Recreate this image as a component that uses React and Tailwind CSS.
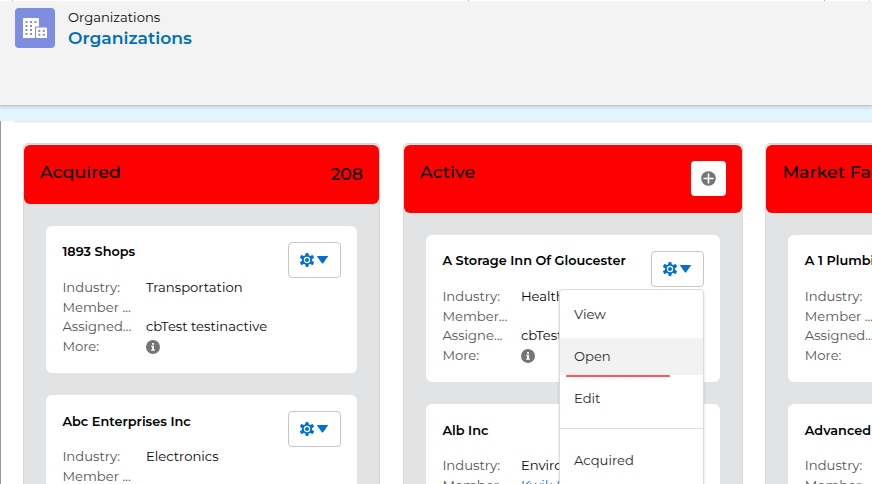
import React from "react";

function GearIcon() {
  return (
    <svg className="block h-[16px] w-[14px]" viewBox="0 0 14 16" fill="#0070d2">
      <g>
        <rect x="5.4" y="1" width="3.2" height="14" rx="1.2" />
        <rect x="5.2" y=".6" width="3.6" height="14.8" rx="1" transform="rotate(60 7 8)" />
        <rect x="5.2" y=".6" width="3.6" height="14.8" rx="1" transform="rotate(-60 7 8)" />
      </g>
      <circle cx="7" cy="8" r="5.1" />
      <circle cx="7" cy="8" r="2.6" fill="none" stroke="#fff" strokeWidth="1.2" />
    </svg>
  );
}

function SettingsButton() {
  return (
    <button className="flex h-[36px] w-[53px] shrink-0 items-center justify-center gap-[3px] rounded-[4px] border border-[#c6c6c8] bg-white pr-[2px]">
      <GearIcon />
      <svg className="block h-[8px] w-[11px]" viewBox="0 0 11 8">
        <path d="M.4 0H10.6Q11.2 .1 10.8 .8L6.1 7.2Q5.5 7.8 4.9 7.2L.2 .8Q-.2 .1 .4 0Z" fill="#0070d2" />
      </svg>
    </button>
  );
}

function InfoIcon() {
  return (
    <svg className="mt-[1.5px] block h-[14px] w-[14px]" viewBox="0 0 14 14">
      <circle cx="7" cy="7" r="7" fill="#747474" />
      <path d="M6 3h2v1.8H6zM5.2 5.8H8V9.6h.9v1.1H5.1V9.6H6V6.9h-.8z" fill="#fff" />
    </svg>
  );
}

function Row({ label, labelWidth, children }) {
  return (
    <div className="flex h-[19.6px] items-center leading-[19.6px]">
      <div className={`shrink-0 whitespace-nowrap text-[#545456] ${labelWidth}`}>{label}</div>
      <div className="whitespace-nowrap text-[#080707]">{children}</div>
    </div>
  );
}

function Card({ name, labelWidth = "w-[83.6px]", member = "Member ...", assigned = "Assigned...", industry, memberValue, assignedValue, info, menu }) {
  return (
    <article className="relative h-[147.3px] shrink-0 rounded-[6px] bg-white pl-[16.4px] pr-4 pt-[16.4px]">
      <div className="flex h-[36px] justify-between">
        <h3 className="whitespace-nowrap pt-[0.4px] text-[12.85px] font-semibold leading-[19px] text-black">{name}</h3>
        <SettingsButton />
      </div>
      <div className="text-[13.15px]">
        <Row label="Industry:" labelWidth={labelWidth}>{industry}</Row>
        <Row label={member} labelWidth={labelWidth}>
          <span className="text-[#0070d2]">{memberValue}</span>
        </Row>
        <Row label={assigned} labelWidth={labelWidth}>{assignedValue}</Row>
        <Row label="More:" labelWidth={labelWidth}>{info && <InfoIcon />}</Row>
      </div>
      {menu}
    </article>
  );
}

function Column({ title, width, headHeight, action, children }) {
  return (
    <section className={`h-[400px] shrink-0 rounded-t-[5px] border border-[#d9d8d8] bg-[#e2e3e5] pt-px ${width}`}>
      <header className={`flex justify-between rounded-[6px] bg-[#ff0000] px-4 pt-4 ${headHeight}`}>
        <h2 className="whitespace-nowrap text-[17.5px] font-medium leading-[21px] text-black">{title}</h2>
        {action}
      </header>
      <div className="flex flex-col gap-[22.2px] px-[22px] pt-[21.6px]">{children}</div>
    </section>
  );
}

function ActionMenu() {
  return (
    <div className="absolute left-[133px] top-[54px] z-10 h-[220px] w-[145px] rounded-[4px] border border-[#dddbda] bg-white pt-[7px] text-[13.15px] text-[#2b2b2b] shadow-[0_2px_3px_rgba(0,0,0,0.16)]">
      <div className="flex h-[41px] items-center pb-[4px] pl-[14px]">View</div>
      <div className="flex h-[37px] items-center bg-[#f3f2f2] pl-[14px] pt-[2px]">Open</div>
      <div className="ml-[6px] h-[2px] w-[104px] rounded-full bg-[#ff5558]" />
      <div className="flex h-[43px] items-center pl-[14px] pt-[2px]">Edit</div>
      <div className="mt-[8px] h-px bg-[#dddbda]" />
      <div className="flex h-[64px] items-center pl-[14px]">Acquired</div>
    </div>
  );
}

function OrganizationLogo() {
  return (
    <div className="flex h-[40px] w-[40px] items-center justify-center rounded-[4px] bg-[#7f8de1]">
      <svg className="h-[20px] w-[24px]" viewBox="0 0 24 20">
        <path
          fill="#fff"
          fillRule="evenodd"
          d="M1 0H15Q16 0 16 1V8.5H13Q12 8.5 12 9.5V20H0V1Q0 0 1 0ZM2.5 3v2h2V3zM7 3v2h2V3zM11.5 3v2h2V3zM2.5 7v2h2V7zM7 7v2h2V7zM2.5 11v2h2v-2zM7 11v2h2v-2zM2.5 15v2h2v-2zM7 15v2h2v-2z"
        />
        <path fill="#fff" fillRule="evenodd" d="M14 9.5h9q1 0 1 1V20H13V10.5q0-1 1-1zM15.3 12v2h2v-2zM19.8 12v2h2v-2zM15.3 15.7v2h2v-2zM19.8 15.7v2h2v-2z" />
      </svg>
    </div>
  );
}

export default function App() {
  return (
    <div className="flex h-[484px] w-[872px] flex-col overflow-hidden bg-white font-['Montserrat','Inter',sans-serif]">
      <div className="flex h-px shrink-0 bg-white">
        <div className="w-[13px] border-r border-[#bbb]" />
        <div className="w-[456px] border-r border-[#bbb]" />
        <div className="w-[356px] border-r border-[#bbb]" />
        <div className="w-[45px] border-r border-[#ccc]" />
      </div>
      <header className="relative flex h-[105px] shrink-0 gap-[13px] border-b border-[#c4c4c8] bg-[#f3f3f3] pl-[15px] pt-[7px] shadow-[0_2px_3px_rgba(0,0,0,0.12)]">
        <OrganizationLogo />
        <div>
          <p className="text-[13.15px] leading-[19px] text-[#080707]">Organizations</p>
          <h1 className="text-[17.15px] font-semibold leading-[22px] text-[#0070b8]">Organizations</h1>
        </div>
      </header>
      <div className="h-[15px] shrink-0 bg-[#e3f5ff]" />
      <main className="flex h-[363px] shrink-0 border-l border-[#999]">
        <div className="flex min-w-0 flex-1 flex-col pl-[22px]">
          <div className="-ml-[9px] h-[2px] shrink-0 bg-gradient-to-b from-[#e6e6e8] to-[#fafafa]" />
          <div className="flex shrink-0 gap-[23px] pt-[20px]">
            <Column
              title="Acquired"
              width="w-[357px]"
              headHeight="h-[59px]"
              action={<span className="pt-[2px] text-[17.3px] font-medium leading-[22px] text-black">208</span>}
            >
              <Card name="1893 Shops" industry="Transportation" assignedValue="cbTest testinactive" info />
              <Card name="Abc Enterprises Inc" industry="Electronics" />
            </Column>
            <Column
              title="Active"
              width="w-[340px]"
              headHeight="h-[68px]"
              action={
                <button className="flex h-[35px] w-[35px] items-center justify-center rounded-[4px] bg-white">
                  <svg className="h-[15px] w-[15px]" viewBox="0 0 15 15">
                    <circle cx="7.5" cy="7.5" r="7.3" fill="#747474" />
                    <path d="M7.5 3v9M3 7.5h9" stroke="#fff" strokeWidth="1.6" strokeLinecap="round" />
                  </svg>
                </button>
              }
            >
              <Card name="A Storage Inn Of Gloucester" labelWidth="w-[78.5px]" member="Member..." assigned="Assigne..." industry="Health" assignedValue="cbTest" info menu={<ActionMenu />} />
              <Card name="Alb Inc" labelWidth="w-[78.5px]" member="Member..." assigned="Assigne..." industry="Enviro" memberValue="Kwik K" />
            </Column>
            <div className="-ml-[0.6px]">
              <Column title="Market Facing" width="w-[357px]" headHeight="h-[68px]">
                <Card name="A 1 Plumbing" />
                <Card name="Advanced Systems" />
              </Column>
            </div>
          </div>
        </div>
      </main>
    </div>
  );
}
